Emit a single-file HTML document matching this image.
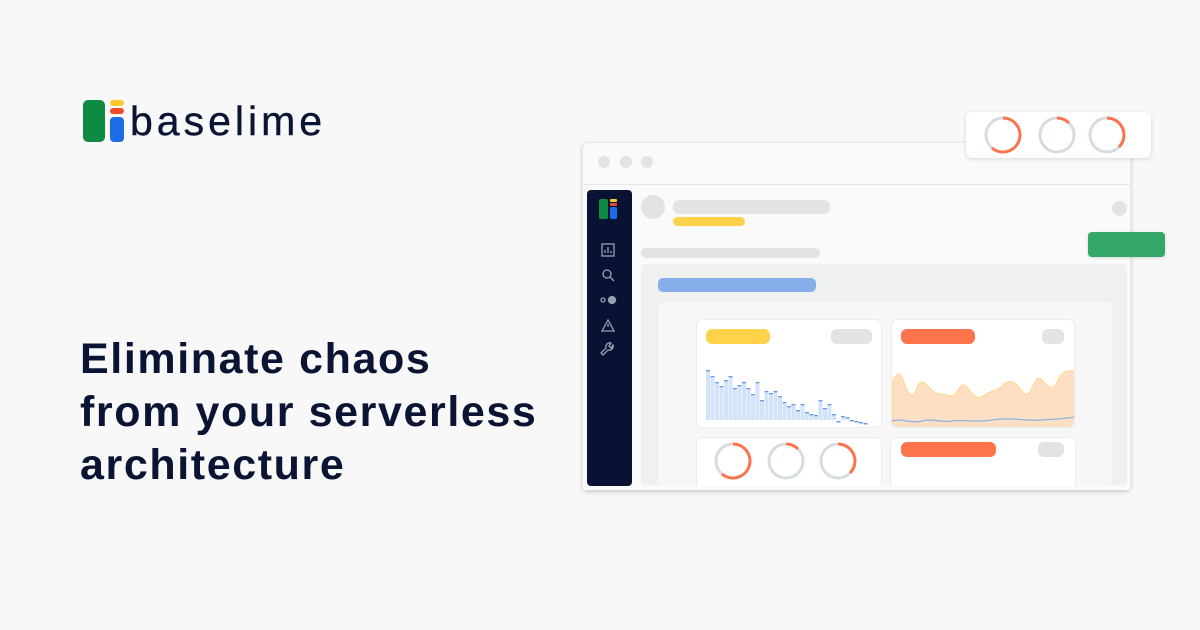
<!DOCTYPE html>
<html><head><meta charset="utf-8"><style>
*{margin:0;padding:0;box-sizing:border-box}
body{width:1200px;height:630px;background:#f8f8f8;position:relative;overflow:hidden;font-family:"Liberation Sans",sans-serif}
.a{position:absolute}
.r{position:absolute;border-radius:6px}
</style></head><body>
<div class="r" style="left:83px;top:100px;width:22px;height:42px;background:#0f8a43;border-radius:5px"></div>
<div class="r" style="left:110px;top:100px;width:14px;height:6px;background:#fdc830;border-radius:3px"></div>
<div class="r" style="left:110px;top:108px;width:14px;height:6px;background:#ef4d2a;border-radius:3px"></div>
<div class="r" style="left:110px;top:117px;width:14px;height:25px;background:#1c6ce8;border-radius:4px"></div>
<div class="a" style="left:130px;top:96px;font-size:41px;color:#0b1533;letter-spacing:4px;line-height:50px;-webkit-text-stroke:0.4px #0b1533">baselime</div>
<div class="a" style="left:80px;top:333px;font-size:43px;font-weight:bold;color:#0b1533;line-height:53px;letter-spacing:1.6px">Eliminate chaos<br>from your serverless<br>architecture</div>

<div class="r" style="left:582px;top:142px;width:549px;height:348px;background:#fafafa;box-shadow:0 2px 4px rgba(0,0,0,.18);border:1px solid #e8e8e8"></div>
<div class="a" style="left:582px;top:184px;width:549px;height:1px;background:#e6e6e6"></div>
<div class="r" style="left:598px;top:156px;width:12px;height:12px;border-radius:50%;background:#e3e3e3"></div>
<div class="r" style="left:620px;top:156px;width:12px;height:12px;border-radius:50%;background:#e3e3e3"></div>
<div class="r" style="left:641px;top:156px;width:12px;height:12px;border-radius:50%;background:#e3e3e3"></div>
<div class="r" style="left:587px;top:190px;width:45px;height:296px;background:#0a1233;border-radius:4px"></div>
<div class="r" style="left:599px;top:199px;width:9px;height:20px;background:#0f8a43;border-radius:2px"></div>
<div class="r" style="left:610px;top:199px;width:7px;height:3px;background:#fdc830;border-radius:1px"></div>
<div class="r" style="left:610px;top:203px;width:7px;height:3px;background:#ef4d2a;border-radius:1px"></div>
<div class="r" style="left:610px;top:207px;width:7px;height:12px;background:#1c6ce8;border-radius:2px"></div>
<svg class="a" style="left:587px;top:235px" width="45" height="130" fill="none" stroke="#9aa0b2" stroke-width="1.3">
<rect x="15" y="9" width="12" height="12"/><path d="M18 18v-3M21 18v-6M24 18v-2"/>
<circle cx="20" cy="39" r="4"/><path d="M23 42l4 4"/>
<circle cx="16" cy="65" r="2"/><circle cx="25" cy="65" r="3.5" fill="#9aa0b2"/>
<path d="M21 85l-6 11h12z"/><path d="M21 89v3"/>
<path d="M26 110a4 4 0 0 1-5 5l-5 5-2-2 5-5a4 4 0 0 1 5-5l-2 3 2 2z"/>
</svg>
<div class="r" style="left:641px;top:195px;width:24px;height:24px;border-radius:50%;background:#e3e3e3"></div>
<div class="r" style="left:673px;top:200px;width:157px;height:14px;background:#e3e3e3"></div>
<div class="r" style="left:673px;top:217px;width:72px;height:9px;background:#ffd24c;border-radius:5px"></div>
<div class="r" style="left:1112px;top:201px;width:15px;height:15px;border-radius:50%;background:#e3e3e3"></div>
<div class="r" style="left:641px;top:248px;width:179px;height:10px;background:#e3e3e3;border-radius:5px"></div>
<div class="r" style="left:641px;top:264px;width:486px;height:221px;background:#eff1ef;border-radius:5px"></div>
<div class="r" style="left:658px;top:278px;width:158px;height:14px;background:#86aee8;border-radius:5px"></div>
<div class="r" style="left:658px;top:302px;width:454px;height:183px;background:#f7f7f7;border-radius:5px"></div>

<div class="r" style="left:696px;top:319px;width:186px;height:109px;background:#fff;border:1px solid #ececec"></div>
<div class="r" style="left:706px;top:329px;width:64px;height:15px;background:#ffd24c"></div>
<div class="r" style="left:831px;top:329px;width:41px;height:15px;background:#e3e3e3"></div>
<svg class="a" style="left:706px;top:370px" width="166" height="56" id="bars"></svg>

<div class="r" style="left:891px;top:319px;width:184px;height:109px;background:#fff;border:1px solid #ececec;overflow:hidden">
<svg class="a" style="left:0;top:0" width="184" height="109">
<path d="M0 62 C5 52 8 50 12 62 S20 80 24 70 S30 60 36 66 S44 74 50 74 S60 80 66 70 S74 66 80 73 S88 78 96 73 S104 72 110 66 S120 60 126 66 S134 80 140 68 S146 56 152 62 S160 72 166 60 S176 52 184 50 L184 109 L0 109Z" fill="#fde0c4" stroke="#ffd98a" stroke-width="1"/>
<path d="M0 101 C10 98 20 104 30 101 S50 103 60 101 S80 103 100 100 S130 101 150 100 S175 98 184 97" stroke="#8fb0e0" fill="none" stroke-width="1.2"/>
</svg></div>
<div class="r" style="left:901px;top:329px;width:74px;height:15px;background:#fd734c"></div>
<div class="r" style="left:1042px;top:329px;width:22px;height:15px;background:#e3e3e3"></div>

<div class="r" style="left:696px;top:437px;width:186px;height:50px;background:#fff;border:1px solid #ececec;border-radius:6px 6px 0 0"></div>
<div class="r" style="left:890px;top:437px;width:186px;height:50px;background:#fff;border:1px solid #ececec;border-radius:6px 6px 0 0"></div>
<div class="r" style="left:901px;top:442px;width:95px;height:15px;background:#fd734c"></div>
<div class="r" style="left:1038px;top:442px;width:26px;height:15px;background:#e3e3e3"></div>
<div class="a" style="left:582px;top:486px;width:549px;height:4px;background:#fafafa;border-radius:0 0 6px 6px"></div>

<svg class="a" style="left:696px;top:440px" width="186" height="44" fill="none" stroke-width="3">
<circle cx="37" cy="21" r="17" stroke="#d6dde0"/><path d="M37 4a17 17 0 1 1 -11 30" stroke="#fd734c"/>
<circle cx="90" cy="21" r="17" stroke="#d6dde0"/><path d="M90 4a17 17 0 0 1 12 5" stroke="#fd734c"/>
<circle cx="142" cy="21" r="17" stroke="#d6dde0"/><path d="M142 4a17 17 0 0 1 12 29" stroke="#fd734c"/>
</svg>

<div class="r" style="left:966px;top:112px;width:185px;height:46px;background:#fff;box-shadow:0 1px 4px rgba(0,0,0,.15)"></div>
<svg class="a" style="left:966px;top:112px" width="185" height="46" fill="none" stroke-width="3">
<circle cx="37" cy="23" r="17" stroke="#d6dde0"/><path d="M37 6a17 17 0 1 1 -11 30" stroke="#fd734c"/>
<circle cx="91" cy="23" r="17" stroke="#d6dde0"/><path d="M91 6a17 17 0 0 1 12 5" stroke="#fd734c"/>
<circle cx="141" cy="23" r="17" stroke="#d6dde0"/><path d="M141 6a17 17 0 0 1 12 29" stroke="#fd734c"/>
</svg>
<div class="r" style="left:1088px;top:232px;width:77px;height:25px;background:#34a769;border-radius:4px;box-shadow:0 1px 3px rgba(0,0,0,.15)"></div>
<script>
var h=[48,42,36,32,38,42,30,33,36,30,24,36,18,27,25,27,22,16,12,14,8,14,6,4,3,18,10,14,4,-3,2,1,-2,-3,-4,-5];
var s='';for(var i=0;i<h.length;i++){var x=i*4.5,v=h[i],t=50-Math.max(v,0);
if(v>0)s+='<rect x="'+x+'" y="'+t+'" width="4" height="'+(50-t)+'" fill="#d3e3fa"/>';
s+='<rect x="'+x+'" y="'+(50-v-2)+'" width="4" height="1.5" fill="#6a9be6"/>';}
document.getElementById('bars').innerHTML=s;
</script>
</body></html>
